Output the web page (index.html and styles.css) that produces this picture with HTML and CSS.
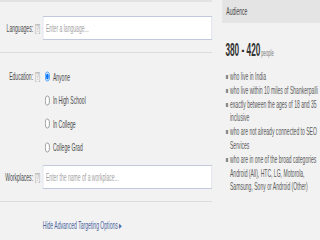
FILE: index.html
```html
<!DOCTYPE html>
<html lang="en">
<head>
  <meta charset="UTF-8" />
  <title>Ad Targeting</title>
  <link rel="stylesheet" href="styles.css">
</head>
<body>
  <div class="frame">
    <div class="page">

      <!-- Targeting form -->
      <div class="targeting">
        <div class="field">
          <label class="field-label">Languages:<span class="help">[?]</span></label>
          <input class="text-input" type="text" placeholder="Enter a language...">
        </div>

        <div class="divider"></div>

        <div class="field field-top">
          <label class="field-label edu-label">Education:<span class="help">[?]</span></label>
          <div class="choices">
            <label class="choice"><input type="radio" name="edu" checked> Anyone</label>
            <label class="choice"><input type="radio" name="edu"> In High School</label>
            <label class="choice"><input type="radio" name="edu"> In College</label>
            <label class="choice"><input type="radio" name="edu"> College Grad</label>
          </div>
        </div>

        <div class="field work">
          <label class="field-label">Workplaces:<span class="help">[?]</span></label>
          <input class="text-input" type="text" placeholder="Enter the name of a workplace...">
        </div>

        <div class="divider"></div>

        <a class="toggle" href="#">Hide Advanced Targeting Options &#9656;</a>
      </div>

      <!-- Audience summary -->
      <aside class="audience">
        <div class="audience-head">Audience</div>
        <div class="reach">380 - 420<span class="reach-unit">people</span></div>
        <ul class="criteria">
          <li>who live in India</li>
          <li>who live within 10 miles of Shankerpalli</li>
          <li>exactly between the ages of 18 and 35 inclusive</li>
          <li>who are not already connected to SEO Services</li>
          <li>who are in one of the broad categories Android (All), HTC, LG, Motorola, Samsung, Sony or Android (Other)</li>
        </ul>
      </aside>

    </div>
  </div>
</body>
</html>
```

FILE: styles.css
```css
* {
  box-sizing: border-box;
  margin: 0;
  padding: 0;
}

body {
  background: #f2f2f2;
  font-family: "Liberation Sans", Arial, sans-serif;
  font-size: 11px;
  color: #4a4a4a;
}

.frame {
  width: 320px;
  height: 240px;
  overflow: hidden;
}

/* the whole capture is squeezed horizontally */
.page {
  width: 696px;
  height: 240px;
  display: flex;
  gap: 22px;
  transform: scaleX(0.46);
  transform-origin: 0 0;
}

.targeting {
  width: 461px;
  border-top: 2px solid #e3e3e3;
}

.field {
  display: flex;
  align-items: center;
  padding-top: 14px;
}

.field-label {
  width: 93px;
  padding-right: 6px;
  text-align: right;
  color: #4a4a4a;
  white-space: nowrap;
}

.help {
  margin-left: 4px;
  font-size: 10px;
  color: #a0a0a0;
}

.text-input {
  flex: 1;
  height: 24px;
  padding: 0 6px;
  border: 1px solid #c3c9dd;
  background: #fff;
  font-family: inherit;
  font-size: 11px;
  color: #333;
  outline: none;
}

.text-input::placeholder {
  color: #a3a3a3;
}

.divider {
  height: 1px;
  background: #dcdcdc;
  margin-top: 12px;
}

.field-top {
  align-items: flex-start;
  padding-top: 12px;
}

.edu-label {
  line-height: 23.5px;
}

.choices {
  display: flex;
  flex-direction: column;
}

.choice {
  height: 23.5px;
  display: flex;
  align-items: center;
  gap: 7px;
  color: #4a4a4a;
}

.choice input {
  width: 10px;
  height: 11px;
  margin: 0 0 0 5px;
}

.work {
  padding-top: 6px;
}

.toggle {
  display: block;
  margin: 17px 0 0 93px;
  line-height: 12px;
  color: #4a64a0;
  text-decoration: none;
}

.audience {
  flex: 1;
}

.audience-head {
  height: 23px;
  line-height: 23px;
  padding-left: 9px;
  background: #e4e4e4;
  color: #444;
}

.reach {
  margin-top: 17px;
  padding-left: 7px;
  font-size: 18px;
  line-height: 20px;
  font-weight: bold;
  color: #333;
}

.reach-unit {
  margin-left: 2px;
  font-size: 9px;
  font-weight: normal;
  color: #777;
}

.criteria {
  list-style: none;
  margin-top: 7px;
  padding: 0 4px 0 8px;
}

.criteria li {
  position: relative;
  padding-left: 9px;
  line-height: 13.8px;
  color: #5a5a5a;
}

.criteria li::before {
  content: "";
  position: absolute;
  left: 0;
  top: 5px;
  width: 5px;
  height: 4px;
  background: #8a8a8a;
}
```
